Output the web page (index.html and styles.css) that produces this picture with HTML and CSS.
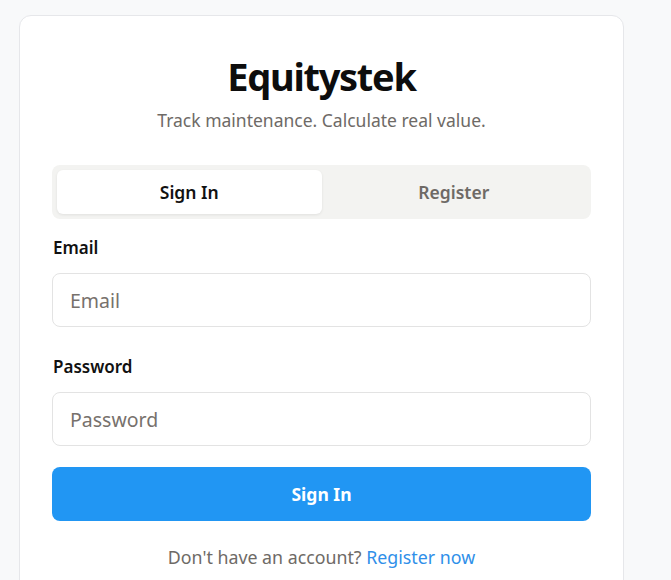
FILE: index.html
```html
<!DOCTYPE html>
<html lang="en">
<head>
<meta charset="utf-8">
<title>Equitystek</title>
<link rel="stylesheet" href="styles.css">
</head>
<body>
<main class="card">
  <h1 class="title">Equitystek</h1>
  <p class="subtitle">Track maintenance. Calculate real value.</p>
  <div class="tabs">
    <button class="tab tab-active" type="button">Sign In</button>
    <button class="tab" type="button">Register</button>
  </div>
  <form class="form">
    <div class="field">
      <label class="label" for="email">Email</label>
      <input class="input" id="email" type="email" placeholder="Email">
    </div>
    <div class="field">
      <label class="label" for="password">Password</label>
      <input class="input" id="password" type="password" placeholder="Password">
    </div>
    <button class="submit" type="button">Sign In</button>
  </form>
  <p class="footer">Don't have an account? <a class="link" href="#">Register now</a></p>
</main>
</body>
</html>
```

FILE: styles.css
```css
html, body {
  margin: 0;
  background: #f8f9fa;
}
body {
  padding: 15px 0 0 19px;
  font-family: "Noto Sans", "Open Sans", sans-serif;
  color: #111;
  height: 580px;
  box-sizing: border-box;
  overflow: hidden;
}
.card {
  box-sizing: border-box;
  width: 605px;
  min-height: 600px;
  background: #fff;
  border: 1px solid #e6e7ea;
  border-radius: 12px;
  padding: 32px 32px;
}
.title {
  margin: 0;
  text-align: center;
  font-size: 38px;
  line-height: 56px;
  font-weight: 700;
  color: #0d0d0d;
  letter-spacing: -1.3px;
}
.subtitle {
  margin: 4px 0 0;
  text-align: center;
  font-size: 17.5px;
  line-height: 24px;
  color: #6e6a66;
}
.tabs {
  margin-top: 33px;
  display: grid;
  grid-template-columns: 1fr 1fr;
  padding: 5px;
  background: #f3f3f1;
  border-radius: 8px;
}
.tab {
  height: 44px;
  border: 0;
  background: transparent;
  border-radius: 6px;
  font-family: inherit;
  font-size: 17.5px;
  font-weight: 600;
  color: #6e6a66;
  cursor: pointer;
}
.tab-active {
  background: #fff;
  color: #111;
  box-shadow: 0 1px 3px rgba(0, 0, 0, 0.08);
}
.form {
  margin-top: 17px;
  display: flex;
  flex-direction: column;
}
.field {
  display: flex;
  flex-direction: column;
  margin-bottom: 28px;
}
.field + .field {
  margin-bottom: 21px;
}
.label {
  padding-left: 1px;
  font-size: 17px;
  line-height: 24px;
  font-weight: 600;
  color: #111;
  margin-bottom: 13px;
}
.input {
  box-sizing: border-box;
  height: 54px;
  border: 1px solid #e3e3e3;
  border-radius: 8px;
  padding: 0 17px;
  font-family: inherit;
  font-size: 19.5px;
  color: #111;
  background: #fff;
  outline: none;
}
.input::placeholder {
  color: #77716c;
}
.submit {
  height: 54px;
  border: 0;
  border-radius: 8px;
  background: #2196f3;
  color: #fff;
  font-family: inherit;
  font-size: 17.5px;
  font-weight: 700;
  cursor: pointer;
}
.footer {
  margin: 24px 0 0;
  text-align: center;
  font-size: 17.8px;
  line-height: 24px;
  color: #6e6a66;
}
.link {
  color: #2f8fe9;
  text-decoration: none;
}
```
